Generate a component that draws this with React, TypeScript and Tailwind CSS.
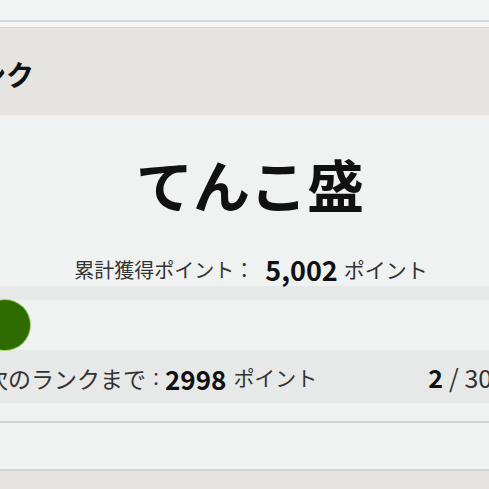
export default function App() {
  const jp = { fontFamily: '"Noto Sans CJK JP", "Noto Sans", sans-serif' };
  return (
    <div className="w-[489px] h-[489px] overflow-hidden bg-[#e4e3e0]" style={jp}>
      <div className="h-[20px] bg-[#f2f3f3]" />
      <div className="h-[2px] bg-[#d6d7d7]" />
      <div className="h-[5px] bg-[#f4f5f5]" />
      <div className="ml-[-60px] w-[620px] border-t-[1px] border-b-2 border-[#d3d4d4] bg-[#f0f1f1]">
        <div className="h-[87px] bg-[#e5e4e0] px-[10px] flex items-center">
          <h2 className="text-[28px] font-bold text-[#111] leading-none pt-[4px]">ランク</h2>
        </div>
        <div className="pt-[40px] flex flex-col items-center">
          <div className="text-[57px] font-bold leading-none text-[#111]">てんこ盛</div>
          <div className="mt-[42px] h-[32px] flex items-center text-[20px] text-[#333] ml-[2px]">
            <span>累計獲得ポイント</span>
            <span>：</span>
            <span className="ml-[11px] text-[27px] font-bold text-[#111]">5,002</span>
            <span className="ml-[6px] text-[21px]">ポイント</span>
          </div>
        </div>
        <div className="px-[40px]">
          <div className="bg-[#e7e8e8] pt-[14px]">
            <div className="h-[50px] bg-[#f0f1f1]">
              <div className="h-[50px] w-[50px] rounded-full bg-[#2e6b00] ring-1 ring-[#96d45a]" />
            </div>
            <div className="h-[53px] pl-[5px] pr-0 flex items-center justify-between text-[#333] pt-[3px]">
              <div className="flex items-center">
                <span className="text-[23px]">次のランクまで</span>
                <span className="ml-[1px] text-[18px]">：</span>
                <span className="text-[26px] font-bold text-[#111]">2998</span>
                <span className="ml-[7px] text-[21px]">ポイント</span>
              </div>
              <div className="flex items-center">
                <span className="text-[25px] font-bold text-[#111]">2</span>
                <span className="ml-[6px] text-[25px]">/ 3000</span>
              </div>
            </div>
          </div>
        </div>
        <div className="h-[18px]" />
        <div className="h-[48px] border-t-2 border-[#d0d1d1] bg-[#f1f2f2]" />
      </div>
    </div>
  );
}
